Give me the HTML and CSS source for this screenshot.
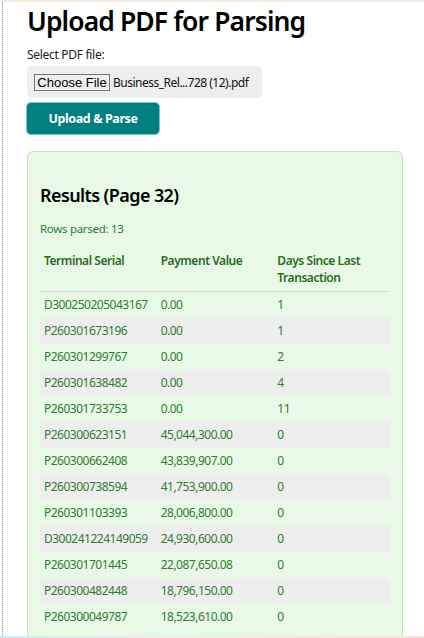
FILE: index.html
```html
<!DOCTYPE html>
<html lang="en">
<head>
<meta charset="utf-8">
<title>Upload PDF for Parsing</title>
<link rel="stylesheet" href="styles.css">
</head>
<body>
<div class="frame">
  <h1 class="title">Upload PDF for Parsing</h1>
  <label class="field-label">Select PDF file:</label>
  <div class="file-box">
    <button class="choose" type="button">Choose File</button>
    <span class="file-name">Business_Rel...728 (12).pdf</span>
  </div>
  <button class="upload" type="button">Upload &amp; Parse</button>

  <section class="card">
    <h2 class="card-title">Results (Page 32)</h2>
    <p class="rows-count">Rows parsed: 13</p>
    <table class="results">
      <thead>
        <tr><th>Terminal Serial</th><th>Payment Value</th><th>Days Since Last Transaction</th></tr>
      </thead>
      <tbody>
        <tr><td>D300250205043167</td><td>0.00</td><td>1</td></tr>
        <tr><td>P260301673196</td><td>0.00</td><td>1</td></tr>
        <tr><td>P260301299767</td><td>0.00</td><td>2</td></tr>
        <tr><td>P260301638482</td><td>0.00</td><td>4</td></tr>
        <tr><td>P260301733753</td><td>0.00</td><td>11</td></tr>
        <tr><td>P260300623151</td><td>45,044,300.00</td><td>0</td></tr>
        <tr><td>P260300662408</td><td>43,839,907.00</td><td>0</td></tr>
        <tr><td>P260300738594</td><td>41,753,900.00</td><td>0</td></tr>
        <tr><td>P260301103393</td><td>28,006,800.00</td><td>0</td></tr>
        <tr><td>D300241224149059</td><td>24,930,600.00</td><td>0</td></tr>
        <tr><td>P260301701445</td><td>22,087,650.08</td><td>0</td></tr>
        <tr><td>P260300482448</td><td>18,796,150.00</td><td>0</td></tr>
        <tr><td>P260300049787</td><td>18,523,610.00</td><td>0</td></tr>
      </tbody>
    </table>
  </section>
</div>
<div class="bottom-edge"></div>
</body>
</html>
```

FILE: styles.css
```css
html {
  border-top: 2px solid #f6ebe0;
}
body {
  margin: 0;
  font-family: "Segoe UI", "Noto Sans", sans-serif;
  color: #000;
  background: #fff;
  overflow: hidden;
}
.frame {
  margin-left: 2px;
  border-left: 1px dotted #9a9a9a;
  padding: 0 21px 0 24px;
  min-height: 700px;
}
.title {
  margin: 0;
  padding-top: 1px;
  font-size: 26.5px;
  line-height: 36px;
  font-weight: 600;
  letter-spacing: -0.9px;
}
.field-label {
  display: block;
  margin-top: 8px;
  font-size: 12px;
  line-height: 16px;
  letter-spacing: -0.3px;
  color: #222;
}
.file-box {
  display: flex;
  align-items: center;
  gap: 3px;
  width: 235px;
  height: 32px;
  box-sizing: border-box;
  margin-top: 3px;
  padding: 0 7px;
  background: #eeeeee;
  border-radius: 5px;
}
.choose {
  flex-shrink: 0;
  white-space: nowrap;
  font-family: "Liberation Sans", Arial, sans-serif;
  font-size: 13px;
  height: 17px;
  width: 76px;
  padding: 0;
  line-height: 15px;
  border: 1px solid #767676;
  background: #efefef;
  color: #000;
  border-radius: 0;
}
.file-name {
  white-space: nowrap;
  font-size: 12px;
  letter-spacing: -0.5px;
  color: #111;
}
.upload {
  display: block;
  margin-top: 4px;
  margin-left: -1px;
  width: 134px;
  height: 33px;
  background: #008080;
  color: #fff;
  font-family: inherit;
  font-size: 12.5px;
  font-weight: 700;
  letter-spacing: -0.4px;
  border: 1px solid #7ac4d4;
  border-radius: 5px;
}
.card {
  margin-top: 16px;
  background: #e8f9e6;
  border: 1px solid #bfe3bb;
  border-radius: 6px;
  padding: 12px 12px 20px;
}
.card-title {
  margin: 19px 0 0;
  font-size: 18px;
  line-height: 24px;
  font-weight: 600;
  letter-spacing: -0.6px;
}
.rows-count {
  margin: 14px 0 0;
  font-size: 11.5px;
  line-height: 16px;
  letter-spacing: -0.3px;
  color: #2e7d32;
}
.results {
  width: 100%;
  margin-top: 11px;
  border-collapse: collapse;
  table-layout: fixed;
  font-size: 12px;
}
.results th {
  text-align: left;
  vertical-align: top;
  font-weight: 600;
  color: #2a6b22;
  padding: 4px 4px 5px;
  line-height: 17px;
  letter-spacing: -0.45px;
  border-bottom: 1px solid #d9d9d9;
}
.results td {
  padding: 0 4px;
  height: 26px;
  line-height: 16px;
  letter-spacing: -0.5px;
  color: #2e7d32;
  white-space: nowrap;
}
.results tbody tr:nth-child(even) td {
  background: #eeeeee;
}
.bottom-edge {
  position: fixed;
  left: 0;
  right: 0;
  bottom: 0;
  height: 2px;
  background: linear-gradient(90deg, #cdeff4, #f2ece4 40%, #f7e6d8);
}
```
